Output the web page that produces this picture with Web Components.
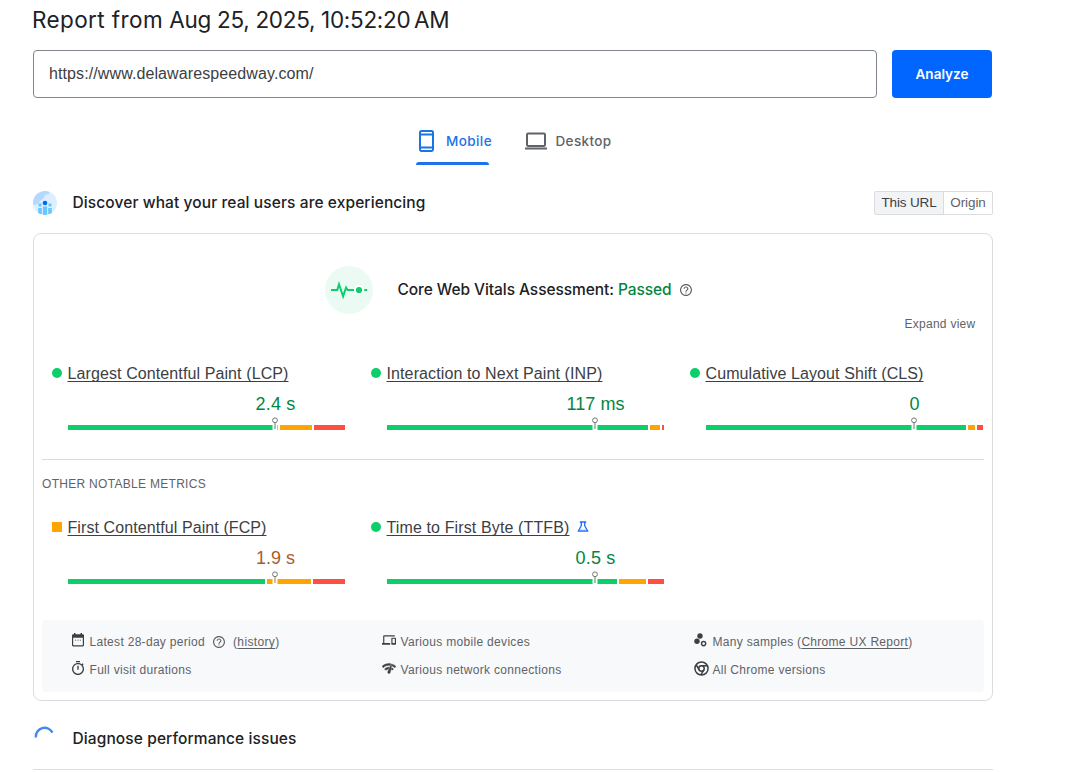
<!DOCTYPE html>
<html lang="en">
<head>
<meta charset="utf-8">
<title>PageSpeed Insights</title>
<style>
html,body{margin:0;background:#fff;overflow:hidden;height:772px}
body{font-family:"Liberation Sans",Arial,sans-serif;color:#202124}
</style>
</head>
<body>
<psi-app></psi-app>
<script>
const define=(name,html,setup)=>customElements.define(name,class extends HTMLElement{
  connectedCallback(){
    if(this.shadowRoot)return;
    this.attachShadow({mode:'open'}).innerHTML=typeof html==='function'?html(this):html;
    if(setup)setup(this);
  }
});

/* A line of text whose tracking adapts to the width given in its w attribute. */
define('fit-text',`<style>:host{display:inline-block;white-space:nowrap}span{display:inline-block}</style><span><slot></slot></span>`,el=>{
  const w=+el.getAttribute('w');
  const s=el.shadowRoot.querySelector('span');
  const n=el.textContent.length;
  if(w&&n>1)s.style.letterSpacing=((w-s.getBoundingClientRect().width)/n).toFixed(4)+'px';
});

const icons={
  phone:['0 0 16 22',16,22,'<rect x="1" y="1" width="13" height="20" rx="1.4" fill="none" stroke="currentColor" stroke-width="2"/><path d="M1 4.500h13M1 17.500h13" stroke="currentColor" stroke-width="2"/>'],
  laptop:['0 0 22 18',22,18,'<rect x="2" y="1.500" width="18" height="12.500" rx="1.200" fill="none" stroke="currentColor" stroke-width="2"/><path d="M0 16.500h22" stroke="currentColor" stroke-width="2"/>'],
  help:['2 2 20 20',12,12,'<path fill="currentColor" d="M11 18h2v-2h-2v2zm1-16C6.48 2 2 6.48 2 12s4.480 10 10 10 10-4.480 10-10S17.520 2 12 2zm0 18c-4.410 0-8-3.590-8-8s3.590-8 8-8 8 3.590 8 8-3.590 8-8 8zm0-14c-2.210 0-4 1.790-4 4h2c0-1.100.9-2 2-2s2 .9 2 2c0 2-3 1.750-3 5h2c0-2.250 3-2.500 3-5 0-2.210-1.790-4-4-4z"/>'],
  calendar:['0 0 12 14',12,14,'<path fill="currentColor" fill-rule="evenodd" d="M2 0h1.500v1.300h5V0H10v1.300h.8c.7 0 1.200.5 1.200 1.200v9.800c0 .7-.5 1.200-1.200 1.200H1.200C.5 13.500 0 13 0 12.300V2.500c0-.7.5-1.200 1.200-1.200H2zM1.200 4.800v7.500h9.600V4.800z"/><path d="M3 7.200h1.200M5.400 7.200h1.200M7.800 7.200H9" stroke="currentColor" stroke-width="1" opacity=".7"/>'],
  timer:['3 1 18 21',12,14,'<path fill="currentColor" d="M15 1H9v2h6V1zm-4 13h2V8h-2v6zm8.030-6.610l1.420-1.420c-.43-.51-.9-.99-1.410-1.410l-1.420 1.420C16.070 4.740 14.120 4 12 4c-4.970 0-9 4.030-9 9s4.020 9 9 9 9-4.030 9-9c0-2.120-.74-4.070-1.970-5.610zM12 20c-3.870 0-7-3.130-7-7s3.130-7 7-7 7 3.130 7 7-3.130 7-7 7z"/>'],
  devices:['0 4 24 16',14,12,'<path fill="currentColor" d="M4 6h18V4H4c-1.100 0-2 .9-2 2v11H0v3h14v-3H4V6zm19 2h-6c-.55 0-1 .45-1 1v10c0 .55.45 1 1 1h6c.55 0 1-.45 1-1V9c0-.55-.45-1-1-1zm-1 9h-4v-7h4v7z"/>'],
  network:['1 4 22 16.500',14,11,'<path fill="currentColor" stroke="currentColor" stroke-width=".7" d="M15.900 5c-.17 0-.32.090-.41.230l-.070.150-5.180 11.650c-.16.290-.26.610-.26.960 0 1.110.9 2.010 2.010 2.010.96 0 1.770-.68 1.960-1.590l.010-.030L16.400 5.500c0-.28-.22-.5-.5-.5zM1 9l2 2c2.880-2.880 6.790-4.080 10.530-3.620l1.190-2.680C9.890 3.840 4.740 5.270 1 9zm20 2l2-2c-1.640-1.640-3.550-2.820-5.590-3.570l-.53 2.820c1.500.62 2.900 1.530 4.120 2.750zm-4 4l2-2c-.8-.8-1.700-1.420-2.660-1.890l-.55 2.920c.42.270.83.590 1.210.970zM5 13l2 2c1.130-1.130 2.560-1.790 4.030-2l1.280-2.880c-2.630-.08-5.300.87-7.310 2.880z"/>'],
  samples:['0 0 13 14',13,14,'<g fill="currentColor"><circle cx="6" cy="3" r="2.700"/><circle cx="3" cy="8.200" r="2.700"/></g><circle cx="9.600" cy="10.600" r="2.100" fill="none" stroke="currentColor" stroke-width="1.400"/>'],
  chrome:['0 0 16 16',15,15,'<g fill="none" stroke="currentColor" stroke-width="1.600"><circle cx="8" cy="8" r="7"/><circle cx="8" cy="8" r="2.900"/><path d="M8 5.100h6.300M5.500 9.500L2.300 4M10.500 9.500l-3.200 5.400"/></g>'],
  flask:['0 0 12 12',12,12,'<path fill="none" stroke="#1a6dff" stroke-width="1.300" stroke-linejoin="round" d="M2.800 1h6.400M4.300 1v3.800L1.200 10.200h9.600L7.700 4.800V1"/><path d="M2.800 8.400h6.400v1.600H2.200z" fill="#1a6dff" opacity=".35"/>'],
  pulse:['0 0 48 48',48,48,'<circle cx="24" cy="24" r="24" fill="#ebfbf4"/><path d="M6 24h6.300l1.700-5.700 4.100 12 3-8.800 1.500 2.500H30" fill="none" stroke="#0cce6b" stroke-width="2"/><circle cx="34" cy="24" r="5" fill="#fff"/><circle cx="34" cy="24" r="3.100" fill="#0cce6b"/><path d="M39.200 24h3" stroke="#0cce6b" stroke-width="2"/>'],
  users:['0 0 24 24',24,24,'<defs><clipPath id="c"><circle cx="12" cy="12" r="12"/></clipPath></defs><g clip-path="url(#c)"><path fill="#ddeeff" d="M0 0h24v24H0z"/><path fill="#b5d8ff" d="M0 0h17l-1 3-4 1-1 3-4 3-2 3-5 1z"/><g fill="#67c8ff"><circle cx="7" cy="14" r="1.700"/><circle cx="17" cy="14" r="1.700"/><path d="M5.200 17h3.600v6H5.200zM15.200 17h3.600v6h-3.600zM9.900 15.400h4.200V24H9.900z"/></g><circle cx="12" cy="12" r="2.300" fill="#0066ff"/></g>'],
  spinner:['0 0 24 24',24,24,'<path d="M2.900 11.500A8.800 8.800 0 0 1 19.500 6.600" fill="none" stroke="#4285f4" stroke-width="2.400"/>']
};
define('ui-icon',el=>{
  const [vb,w,h,body]=icons[el.getAttribute('name')];
  return `<style>:host{display:block;flex:none;width:${w}px;height:${h}px}svg{display:block}</style><svg width="${w}" height="${h}" viewBox="${vb}">${body}</svg>`;
});

define('device-tab',el=>`<style>
:host{display:flex;align-items:center;position:relative;height:48px;font:500 13.500px Inter,sans-serif;color:#5f6368}
:host([active]){color:#1a73e8}
:host([active])::after{content:"";position:absolute;left:0;right:3px;bottom:0;height:3px;border-radius:3px 3px 0 0;background:#1a73e8}
</style><slot name="icon"></slot><slot></slot>`);

define('metric-gauge',el=>{
  const [a,b,c]=el.getAttribute('bar').split(',');
  const warn=el.hasAttribute('warn');
  const main=warn?'#ffa400':'#0cce6b';
  const at=+el.getAttribute('pin');
  return `<style>
:host{display:block;width:293px}
.name{display:flex;align-items:center;height:20px;font-size:16px;line-height:20px;color:#3c4043}
.dot{width:10px;height:10px;margin-right:5.500px;background:${main};border-radius:${warn?0:5}px}
.name fit-text{margin-top:2px}
u{text-underline-offset:2px;text-decoration-thickness:1px;text-decoration-skip-ink:none}
.value{margin-left:16px;width:${at*2+1}px;margin-top:10px;text-align:center;font-size:18px;line-height:22px;height:32px;color:${warn?'#a85d2b':'#018642'}}
.bar{display:flex;gap:2px;width:277px;height:5px;margin-left:16px;position:relative}
.bar i{display:block;height:5px}
.pin{position:absolute;left:${at-3}px;top:-8px}
ui-icon{margin-left:7px}
</style>
<div class="name"><span class="dot"></span><fit-text w="${el.getAttribute('nw')}"><u>${el.getAttribute('name')}</u></fit-text>${el.hasAttribute('beta')?'<ui-icon name="flask"></ui-icon>':''}</div>
<div class="value"><fit-text w="${el.getAttribute('vw')||''}">${el.getAttribute('value')}</fit-text></div>
<div class="bar"><i style="width:${a}px;background:#0cce6b"></i><i style="width:${b}px;background:#ffa400"></i><i style="width:${c}px;background:#ff4e42"></i>
<svg class="pin" width="6" height="13"><rect x=".5" y="8" width="5" height="5" fill="#fff"/><rect x="2" y="6" width="2" height="6" fill="${warn?'#d2bd9c':'#9bc9b0'}"/><circle cx="3" cy="3.300" r="2.400" fill="#fff" stroke="#757575"/></svg></div>`;
});

define('info-item',`<style>:host{display:flex;align-items:center;height:28px;font-size:12px;color:#5f6368}
.ic{width:17.500px;display:flex;color:#3c4043;margin-top:-4px}:host([wide]) .ic{width:18.500px}</style><span class="ic"><slot name="icon"></slot></span><slot></slot>`);

define('section-title',`<style>:host{display:flex;align-items:center;height:24px;font:500 15.500px Inter,sans-serif;color:#202124}
.t{margin:-2px 0 0 15.500px;flex:1}</style><slot name="icon"></slot><span class="t"><slot></slot></span><slot name="end"></slot>`);

define('scope-toggle',`<style>:host{display:flex;box-sizing:border-box;width:119px;height:24px;border:1px solid #dadce0;border-radius:2px;font:13.500px/22px "Liberation Sans",sans-serif;color:#5f6368}
div{text-align:center}.a{box-sizing:border-box;width:69px;background:#f1f3f4;border-right:1px solid #dadce0;color:#3c4043}.b{flex:1}</style><div class="a"><fit-text w="55">This URL</fit-text></div><div class="b"><fit-text w="35.500">Origin</fit-text></div>`);

define('vitals-card',`<style>
:host{display:block;box-sizing:border-box;width:960px;height:468px;margin-top:18px;padding:32px 8px 0;border:1px solid #dadce0;border-radius:8px}
.assess{display:flex;align-items:center;height:48px;padding-left:283px;font:500 15.500px Inter,sans-serif;color:#202124}
.assess fit-text{margin:-2px 0 0 24.500px}.assess b{font-weight:500;color:#018642}
.assess .h{color:#5f6368;margin-left:8.500px}
.expand{display:flex;justify-content:flex-end;padding-right:8.500px;margin-top:2px;height:16px;font-size:12px;line-height:16px;color:#5f6368}
.grid{display:grid;grid-template-columns:319px 319px 293px;padding-left:10px}
.one{margin-top:31px}
.line{height:1px;background:#dadce0;margin-top:29px}
.other{margin-top:16px;height:16px;font-size:12px;line-height:16px;color:#5f6368}
.two{margin-top:25px}
.foot{display:grid;box-sizing:border-box;grid-template-columns:310px 312px 1fr;grid-auto-rows:28px;margin-top:36px;height:72px;padding:8px 0 0 30px;background:#f8f9fa;border-radius:4px}
u{text-underline-offset:2px;text-decoration-skip-ink:none}
.foot .h{margin:0 8px}
</style>
<div class="assess"><ui-icon name="pulse"></ui-icon><fit-text w="274">Core Web Vitals Assessment: <b>Passed</b></fit-text><ui-icon class="h" name="help"></ui-icon></div>
<div class="expand"><fit-text w="71">Expand view</fit-text></div>
<div class="grid one">
<metric-gauge name="Largest Contentful Paint (LCP)" nw="221" value="2.4 s" vw="40" pin="207" bar="210,32,31"></metric-gauge>
<metric-gauge name="Interaction to Next Paint (INP)" nw="216" value="117 ms" vw="58" pin="208" bar="261,10,2"></metric-gauge>
<metric-gauge name="Cumulative Layout Shift (CLS)" nw="218" value="0" pin="208" bar="260,7,6"></metric-gauge>
</div>
<div class="line"></div>
<div class="other"><fit-text w="164">OTHER NOTABLE METRICS</fit-text></div>
<div class="grid two">
<metric-gauge warn name="First Contentful Paint (FCP)" nw="199" value="1.9 s" vw="39" pin="207" bar="197,44,32"></metric-gauge>
<metric-gauge beta name="Time to First Byte (TTFB)" nw="183" value="0.5 s" vw="40" pin="208" bar="230,27,16"></metric-gauge>
</div>
<div class="foot">
<info-item><ui-icon slot="icon" name="calendar"></ui-icon><fit-text w="115.500">Latest 28-day period</fit-text><ui-icon class="h" name="help"></ui-icon><fit-text w="46.500">(<u>history</u>)</fit-text></info-item>
<info-item wide><ui-icon slot="icon" name="devices"></ui-icon><fit-text w="129.500">Various mobile devices</fit-text></info-item>
<info-item wide><ui-icon slot="icon" name="samples"></ui-icon><fit-text w="200">Many samples (<u>Chrome UX Report</u>)</fit-text></info-item>
<info-item><ui-icon slot="icon" name="timer"></ui-icon><fit-text w="102">Full visit durations</fit-text></info-item>
<info-item wide><ui-icon slot="icon" name="network"></ui-icon><fit-text w="161">Various network connections</fit-text></info-item>
<info-item wide><ui-icon slot="icon" name="chrome"></ui-icon><fit-text w="113">All Chrome versions</fit-text></info-item>
</div>`);

define('url-bar',`<style>:host{display:flex;gap:15px;height:48px}
.in{box-sizing:border-box;width:844px;border:1px solid #80868b;border-radius:4px;padding-left:15px;font-size:16px;line-height:45px;color:#3c4043}
.go{width:100px;border-radius:4px;background:#06f;color:#fff;text-align:center;font:600 13.500px/48px Inter,sans-serif}</style>
<div class="in"><fit-text w="264.500">https://www.delawarespeedway.com/</fit-text></div><div class="go"><fit-text w="53">Analyze</fit-text></div>`);

define('psi-app',`<style>
:host{display:block;width:960px;margin-left:33px}
.title{height:50px;font:400 22.500px/40px Inter,sans-serif;color:#202124}
.title fit-text:first-child{margin-left:-1px}
.tabs{display:flex;margin:19px 0 26px 383px;gap:31px}
.tabs ui-icon[name=phone]{margin:0 11px 0 3px}
.tabs ui-icon[name=laptop]{margin:0 8.500px 0 2px}
.tabs fit-text{margin-top:-1px}
.diag{margin-top:26px;height:24px}
.diag ui-icon{margin-top:-3px}
.line{height:1px;background:#dadce0;margin-top:18px}
</style>
<div class="title"><fit-text w="131">Report from</fit-text> <fit-text w="280">Aug 25, 2025, 10:52:20&#8239;AM</fit-text></div>
<url-bar></url-bar>
<div class="tabs"><device-tab active><ui-icon slot="icon" name="phone"></ui-icon><fit-text w="46">Mobile</fit-text></device-tab><device-tab><ui-icon slot="icon" name="laptop"></ui-icon><fit-text w="56">Desktop</fit-text></device-tab></div>
<section-title><ui-icon slot="icon" name="users"></ui-icon><fit-text w="353">Discover what your real users are experiencing</fit-text><scope-toggle slot="end"></scope-toggle></section-title>
<vitals-card></vitals-card>
<section-title class="diag"><ui-icon slot="icon" name="spinner"></ui-icon><fit-text w="224">Diagnose performance issues</fit-text></section-title>
<div class="line"></div>`);
</script>
</body>
</html>
